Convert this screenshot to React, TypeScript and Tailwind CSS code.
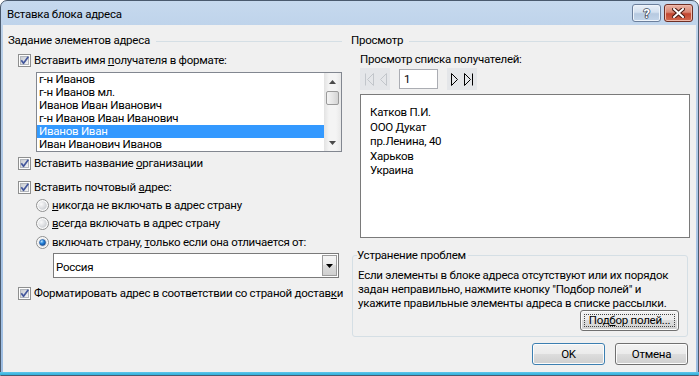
import React from "react";

function Defs() {
  return (
    <svg width="0" height="0" className="absolute w-0 h-0">
      <defs>
        <linearGradient id="cbIn" x1="0" y1="0" x2="1" y2="1">
          <stop offset="0" stopColor="#c5c9cf" />
          <stop offset="1" stopColor="#f7f7f7" />
        </linearGradient>
        <radialGradient id="rdIn" cx="0.35" cy="0.35" r="0.75">
          <stop offset="0" stopColor="#fafafa" />
          <stop offset="1" stopColor="#c9ccd1" />
        </radialGradient>
        <radialGradient id="rdDot" cx="0.35" cy="0.3" r="0.75">
          <stop offset="0" stopColor="#bfe6ff" />
          <stop offset="0.45" stopColor="#2c8ae0" />
          <stop offset="1" stopColor="#0b4a99" />
        </radialGradient>
      </defs>
    </svg>
  );
}

function CheckBox() {
  return (
    <svg width="13" height="13" viewBox="0 0 13 13" className="shrink-0">
      <rect x="0.5" y="0.5" width="12" height="12" fill="#fdfdfd" stroke="#8e8f8f" />
      <rect x="2.5" y="2.5" width="8" height="8" fill="url(#cbIn)" stroke="#b2b6bc" />
      <path d="M3.3 6.3 L5.5 9.3 L10.3 2.8" fill="none" stroke="#43579c" strokeWidth="1.7" strokeLinejoin="round" />
    </svg>
  );
}

function Radio({ checked }: { checked?: boolean }) {
  return (
    <svg width="13" height="13" viewBox="0 0 13 13" className="shrink-0">
      <circle cx="6.5" cy="6.5" r="6" fill="#fbfbfb" stroke="#8e8f8f" />
      <circle cx="6.5" cy="6.5" r="4.3" fill="url(#rdIn)" />
      {checked && <circle cx="6.5" cy="6.5" r="3" fill="url(#rdDot)" stroke="#1b4f93" strokeWidth="0.6" />}
    </svg>
  );
}

function U({ children }: { children: React.ReactNode }) {
  return <span className="underline underline-offset-[1px]">{children}</span>;
}

function CheckRow({ children, className = "" }: { children: React.ReactNode; className?: string }) {
  return (
    <div className={"flex items-center h-[16px] pl-[10px] " + className}>
      <CheckBox />
      <span className="ml-[3px] whitespace-nowrap">{children}</span>
    </div>
  );
}

function RadioRow({ children, checked, className = "" }: { children: React.ReactNode; checked?: boolean; className?: string }) {
  return (
    <div className={"flex items-center h-[16px] pl-[28px] " + className}>
      <Radio checked={checked} />
      <span className="ml-[3px] whitespace-nowrap">{children}</span>
    </div>
  );
}

function Header({ children }: { children: React.ReactNode }) {
  return (
    <div className="flex items-center h-[15px]">
      <span className="whitespace-nowrap">{children}</span>
      <div className="flex-1 h-px bg-[#d5dfe5] ml-[6px] mt-[1px]" />
    </div>
  );
}

function Tri({ dir }: { dir: "up" | "down" }) {
  return (
    <svg width="7" height="4" viewBox="0 0 7 4">
      {dir === "up" ? <path d="M0 4 L3.5 0 L7 4 Z" fill="#4a4a4a" /> : <path d="M0 0 L3.5 4 L7 0 Z" fill="#4a4a4a" />}
    </svg>
  );
}

function NavIcon({ kind, color }: { kind: "first" | "prev" | "next" | "last"; color: string }) {
  if (kind === "first")
    return (
      <svg width="10" height="13" viewBox="0 0 10 13">
        <path d="M1.5 0.5 V12.5" stroke={color} />
        <path d="M9.5 0.5 L3.5 6.5 L9.5 12.5 Z" fill="none" stroke={color} />
      </svg>
    );
  if (kind === "prev")
    return (
      <svg width="8" height="13" viewBox="0 0 8 13">
        <path d="M7.5 0.5 L1.5 6.5 L7.5 12.5 Z" fill="none" stroke={color} />
      </svg>
    );
  if (kind === "next")
    return (
      <svg width="8" height="13" viewBox="0 0 8 13">
        <path d="M0.5 0.5 L6.5 6.5 L0.5 12.5 Z" fill="none" stroke={color} />
      </svg>
    );
  return (
    <svg width="10" height="13" viewBox="0 0 10 13">
      <path d="M0.5 0.5 L6.5 6.5 L0.5 12.5 Z" fill="none" stroke={color} />
      <path d="M8.5 0.5 V12.5" stroke={color} />
    </svg>
  );
}

const items = [
  "г-н Иванов",
  "г-н Иванов мл.",
  "Иванов Иван Иванович",
  "г-н Иванов Иван Иванович",
  "Иванов Иван",
  "Иван Иванович Иванов",
];

const btn =
  "flex items-center justify-center rounded-[3px] border bg-[linear-gradient(#f2f2f2_0%,#ebebeb_50%,#dddddd_50%,#cfcfcf_100%)] shadow-[inset_0_0_0_1px_#fcfcfc]";

export default function App() {
  return (
    <div className="w-[699px] h-[376px] overflow-hidden bg-white font-['Roboto',sans-serif] text-[11.5px] tracking-[-0.25px] leading-[15px] text-black">
      <Defs />
      <div className="w-[699px] h-[376px] flex flex-col rounded-t-[7px] border border-[#4a5a6e] bg-[linear-gradient(#c6d9ee_0%,#b9cfe8_12%,#9dbde2_100%)]">
        {/* title bar */}
        <div className="h-[24px] shrink-0 flex items-center pl-[6px] pr-[5px]">
          <span className="flex-1 pt-[2px] whitespace-nowrap">Вставка блока адреса</span>
          <div className="flex gap-[3px] self-start mt-[3px]">
            <div className="w-[29px] h-[18px] rounded-[3px] border border-[#6b7f9c] bg-[linear-gradient(#eaf0f8_0%,#d3e0ef_45%,#b6c9e0_55%,#c4d6ea_100%)] shadow-[inset_0_0_0_1px_#eef4fb] flex items-center justify-center">
              <span className="text-white font-bold text-[13px] leading-[13px] [-webkit-text-stroke:1.5px_#3e4a5c] [paint-order:stroke_fill]">?</span>
            </div>
            <div className="w-[29px] h-[18px] rounded-[3px] border border-[#6e2f25] bg-[linear-gradient(#eab3a5_0%,#d98672_45%,#c2452f_55%,#d26a4f_100%)] shadow-[inset_0_0_0_1px_#f0b9aa] flex items-center justify-center">
              <svg width="13" height="10" viewBox="0 0 13 10">
                <path d="M2 1 L11 9 M11 1 L2 9" stroke="#4a1a12" strokeWidth="4" strokeLinecap="square" />
                <path d="M2 1 L11 9 M11 1 L2 9" stroke="#ffffff" strokeWidth="2" strokeLinecap="square" />
              </svg>
            </div>
          </div>
        </div>

        {/* client area */}
        <div className="h-[347px] mx-[2px] bg-[#f0f0f0] flex pl-[5px] pt-[8px]">
          {/* left column */}
          <div className="w-[334px] flex flex-col">
            <Header>Задание элементов адреса</Header>
            <CheckRow className="mt-[4px]">
              Вставить имя <U>п</U>олучателя в формате:
            </CheckRow>
            <div className="mt-[4px] ml-[28px] w-[306px] h-[80px] border border-[#828790] bg-white flex">
              <div className="flex-1 flex flex-col">
                {items.map((t, i) => (
                  <div
                    key={t}
                    className={
                      "h-[13px] leading-[13px] pl-[2px] whitespace-nowrap " +
                      (i === 4 ? "bg-[#3399ff] text-white" : "")
                    }
                  >
                    {t}
                  </div>
                ))}
              </div>
              <div className="w-[17px] flex flex-col items-center bg-[linear-gradient(90deg,#e3e3e3,#f4f4f4_30%,#f4f4f4_70%,#e8e8e8)]">
                <div className="h-[17px] flex items-center justify-center">
                  <Tri dir="up" />
                </div>
                <div className="mt-[1px] w-[13px] h-[14px] rounded-[2px] border border-[#9a9a9a] bg-[linear-gradient(90deg,#f4f4f4,#e6e6e6_50%,#d4d4d4)]" />
                <div className="flex-1" />
                <div className="h-[17px] flex items-center justify-center">
                  <Tri dir="down" />
                </div>
              </div>
            </div>
            <CheckRow className="mt-[3px]">
              Вставить название <U>о</U>рганизации
            </CheckRow>
            <CheckRow className="mt-[8px]">
              Вставить почтовый <U>а</U>дрес:
            </CheckRow>
            <RadioRow className="mt-[2px]">
              <U>н</U>икогда не включать в адрес страну
            </RadioRow>
            <RadioRow className="mt-[2px]">
              <U>в</U>сегда включать в адрес страну
            </RadioRow>
            <RadioRow className="mt-[3px]" checked>
              включать страну, <U>т</U>олько если она отличается от:
            </RadioRow>
            <div className="mt-[3px] ml-[45px] w-[286px] h-[25px] border border-[#7a7a7a] bg-white flex items-center">
              <span className="flex-1 pl-[2px] pt-[3px]">Россия</span>
              <div className="w-[15px] h-[21px] mr-[1px] border border-[#9c9c9c] bg-[linear-gradient(#f6f6f6_0%,#ebebeb_50%,#dcdcdc_50%,#d0d0d0_100%)] flex items-center justify-center">
                <svg width="7" height="4" viewBox="0 0 7 4">
                  <path d="M0 0 L3.5 4 L7 0 Z" fill="#000" />
                </svg>
              </div>
            </div>
            <CheckRow className="mt-[7px]">
              Форматировать адрес в соответствии со страной достав<U>к</U>и
            </CheckRow>
          </div>

          {/* right column */}
          <div className="w-[339px] ml-[9px] flex flex-col">
            <Header>Просмотр</Header>
            <div className="mt-[3px] h-[16px] flex items-center pl-[9px]">Просмотр списка получателей:</div>
            <div className="mt-[1px] h-[22px] pl-[9px] flex items-center">
              <div className="w-[30px] h-[22px] bg-[#e4e6e9] flex items-center justify-center gap-[5px]">
                <NavIcon kind="first" color="#c2c6cb" />
                <NavIcon kind="prev" color="#c2c6cb" />
              </div>
              <div className="ml-[9px] w-[39px] h-[20px] border border-[#abadb3] bg-white flex items-center pl-[4px] pt-[1px]">1</div>
              <div className="ml-[9px] w-[30px] h-[22px] bg-[#e4e6e9] flex items-center justify-center gap-[5px]">
                <NavIcon kind="next" color="#000" />
                <NavIcon kind="last" color="#000" />
              </div>
            </div>
            <div className="mt-[4px] ml-[9px] w-[330px] h-[144px] border border-[#7a7a7a] bg-white pl-[9px] pt-[10px] leading-[14.5px]">
              <div>Катков П.И.</div>
              <div>ООО Дукат</div>
              <div>пр.Ленина, 40</div>
              <div>Харьков</div>
              <div>Украина</div>
            </div>
            <div className="relative mt-[17px] ml-[1px] w-[336px] h-[82px] rounded-[3px] border border-[#d5dfe5] flex flex-col">
              <span className="absolute -top-[8px] left-[4px] bg-[#f0f0f0] pr-[2px] whitespace-nowrap">Устранение проблем</span>
              <div className="pt-[12px] pl-[5px] leading-[14px] whitespace-nowrap">
                Если элементы в блоке адреса отсутствуют или их порядок
                <br />
                задан неправильно, нажмите кнопку "Подбор полей" и
                <br />
                укажите правильные элементы адреса в списке рассылки.
              </div>
              <div className={btn + " self-end mr-[8px] w-[99px] h-[21px] border-[#707070] relative"}>
                <div className="absolute inset-[3px] border border-dotted border-[#444]" />
                <span>
                  Под<U>б</U>ор полей...
                </span>
              </div>
            </div>
            <div className="mt-[6px] flex justify-end gap-[10px] mr-[2px]">
              <div className={btn + " w-[73px] h-[22px] border-[#3c7fb1] shadow-[inset_0_0_0_1px_#b9e1f8]"}>OK</div>
              <div className={btn + " w-[73px] h-[22px] border-[#707070]"}>Отмена</div>
            </div>
          </div>
        </div>
        <div className="h-[3px] mx-[-1px] bg-[linear-gradient(#5fc6ea,#2fb0dc)]" />
      </div>
    </div>
  );
}
